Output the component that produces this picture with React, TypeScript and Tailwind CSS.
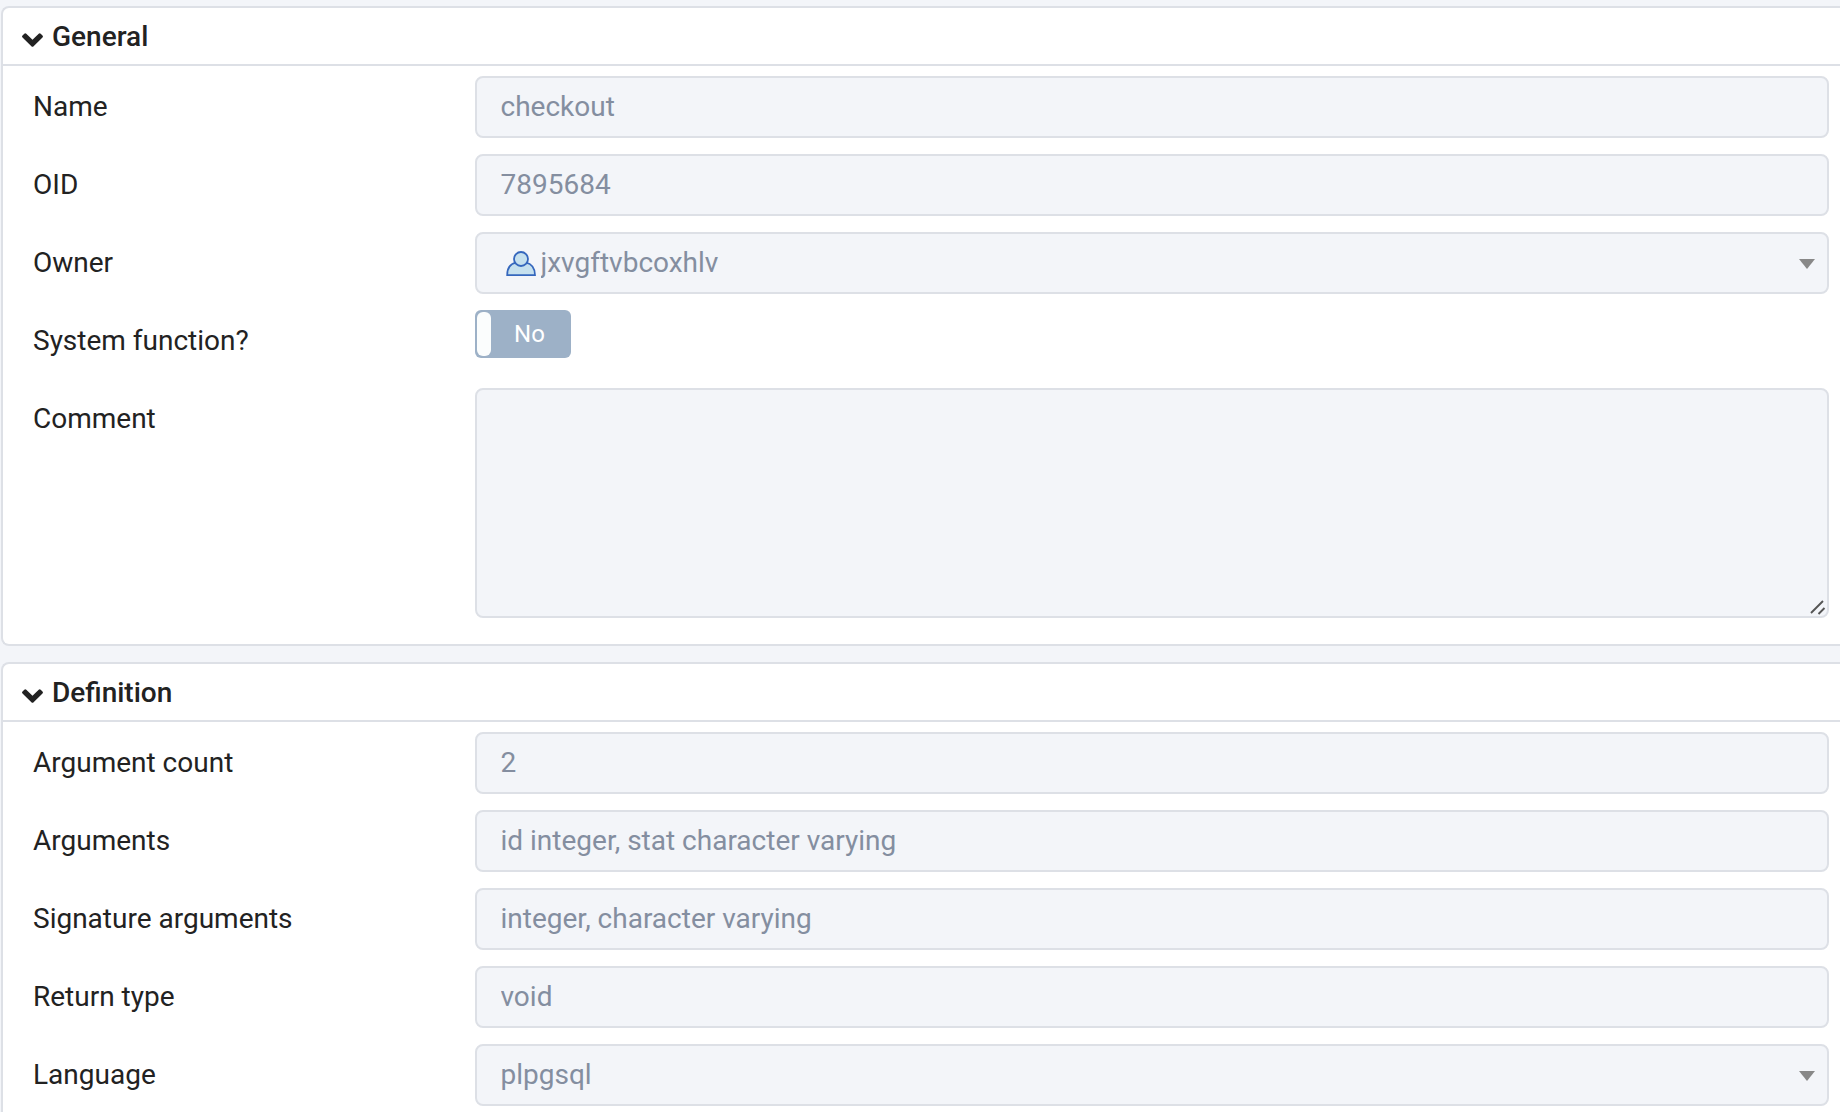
import { useState } from 'react';
import type { ReactNode } from 'react';

const control =
  'block w-full rounded-lg border-2 border-[#dde0e6] bg-[#f3f5f9] px-6 text-[28px] leading-8 text-[#848ea0] opacity-100 outline-none';

function Chevron({ open }: { open: boolean }) {
  return (
    <svg viewBox="0 0 24 24" className={`size-6 ${open ? '' : '-rotate-90'}`} aria-hidden="true">
      <path
        d="M10.400 17.200L1.500 8.400a1.400 1.400 0 0 1 0-2L3.300 4.700a1.400 1.400 0 0 1 2 0L11.500 10.800L17.700 4.700a1.400 1.400 0 0 1 2 0L21.500 6.400a1.400 1.400 0 0 1 0 2L12.600 17.200a1.500 1.500 0 0 1-2.200 0z"
        fill="currentColor"
      />
    </svg>
  );
}

function Section({ title, children }: { title: string; children: ReactNode }) {
  const [open, setOpen] = useState(true);

  return (
    <section className="rounded-l-lg border-2 border-r-0 border-[#dde0e6] bg-white">
      <h2>
        <button
          type="button"
          aria-expanded={open}
          onClick={() => setOpen(!open)}
          className="flex h-14 w-full items-center px-[18px] pt-[2px] text-left"
        >
          <span className="flex items-end gap-[7px] text-[28px] leading-8 font-medium">
            <Chevron open={open} />
            {title}
          </span>
        </button>
      </h2>
      {open ? (
        <div className="flex flex-col gap-4 border-t-2 border-[#dde0e6] pt-[10px] pr-[11px] pb-[26px] pl-5">
          {children}
        </div>
      ) : null}
    </section>
  );
}

function Row({ id, label, children }: { id: string; label: string; children: ReactNode }) {
  return (
    <div className="flex min-h-[62px] items-start">
      <label htmlFor={id} className="w-1/4 shrink-0 py-[15px] pl-[10px] text-[28px] leading-8">
        {label}
      </label>
      <div className="relative min-w-0 flex-1">{children}</div>
    </div>
  );
}

function TextRow({ id, label, value }: { id: string; label: string; value: string }) {
  return (
    <Row id={id} label={label}>
      <input id={id} type="text" value={value} disabled readOnly className={`${control} h-[62px] pb-[2px]`} />
    </Row>
  );
}

function SelectRow({ id, label, value, icon }: { id: string; label: string; value: string; icon?: ReactNode }) {
  return (
    <Row id={id} label={label}>
      <select id={id} disabled defaultValue={value} className={`${control} h-[62px] appearance-none ${icon ? 'pl-16' : ''}`}>
        <option value={value}>{value}</option>
      </select>
      {icon}
      <svg viewBox="0 0 16 10" className="pointer-events-none absolute top-[27px] right-[14px] h-[10px] w-4" aria-hidden="true">
        <path d="M0 0h16L8 10z" fill="#888888" />
      </svg>
    </Row>
  );
}

function RoleIcon() {
  return (
    <svg viewBox="0 0 30 26" className="pointer-events-none absolute top-[19px] left-[31px] h-[26px] w-[30px]" aria-hidden="true">
      <path
        d="M1.200 24.200C1.200 17 4.800 12.600 10 11.600h10c5.200 1 9 5.400 9 12.600z"
        fill="#c5e0ee"
        stroke="#3567bd"
        strokeWidth="1.800"
      />
      <circle cx="15" cy="8" r="7" fill="#c5e0ee" stroke="#3567bd" strokeWidth="1.800" />
    </svg>
  );
}

export default function App() {
  return (
    <main className="flex h-screen flex-col gap-4 overflow-hidden bg-[#f3f5f9] pt-[6px] pl-px font-['Roboto',sans-serif] text-[#222222] *:shrink-0">
      <Section title="General">
        <TextRow id="name" label="Name" value="checkout" />
        <TextRow id="oid" label="OID" value="7895684" />
        <SelectRow id="owner" label="Owner" value="jxvgftvbcoxhlv" icon={<RoleIcon />} />
        <Row id="system" label="System function?">
          <div className="relative flex h-12 w-24 overflow-hidden rounded-md bg-[#9db1c7] p-[2px]">
            <span className="w-[14px] rounded-md bg-[#fbfdfd]" />
            <span className="flex-1 text-center text-2xl leading-11 text-white">No</span>
            <input id="system" type="checkbox" role="switch" disabled className="absolute inset-0 size-full opacity-0" />
          </div>
        </Row>
        <Row id="comment" label="Comment">
          <textarea id="comment" disabled className={`${control} h-[230px] resize-none py-3`} />
          <svg viewBox="0 0 16 16" className="pointer-events-none absolute right-[3px] bottom-[3px] size-4" aria-hidden="true">
            <path d="M1 14L13 2M8.500 15l6-6" stroke="#555555" strokeWidth="1.900" />
          </svg>
        </Row>
      </Section>

      <Section title="Definition">
        <TextRow id="argcount" label="Argument count" value="2" />
        <TextRow id="args" label="Arguments" value="id integer, stat character varying" />
        <TextRow id="signature" label="Signature arguments" value="integer, character varying" />
        <TextRow id="returns" label="Return type" value="void" />
        <SelectRow id="language" label="Language" value="plpgsql" />
      </Section>
    </main>
  );
}
